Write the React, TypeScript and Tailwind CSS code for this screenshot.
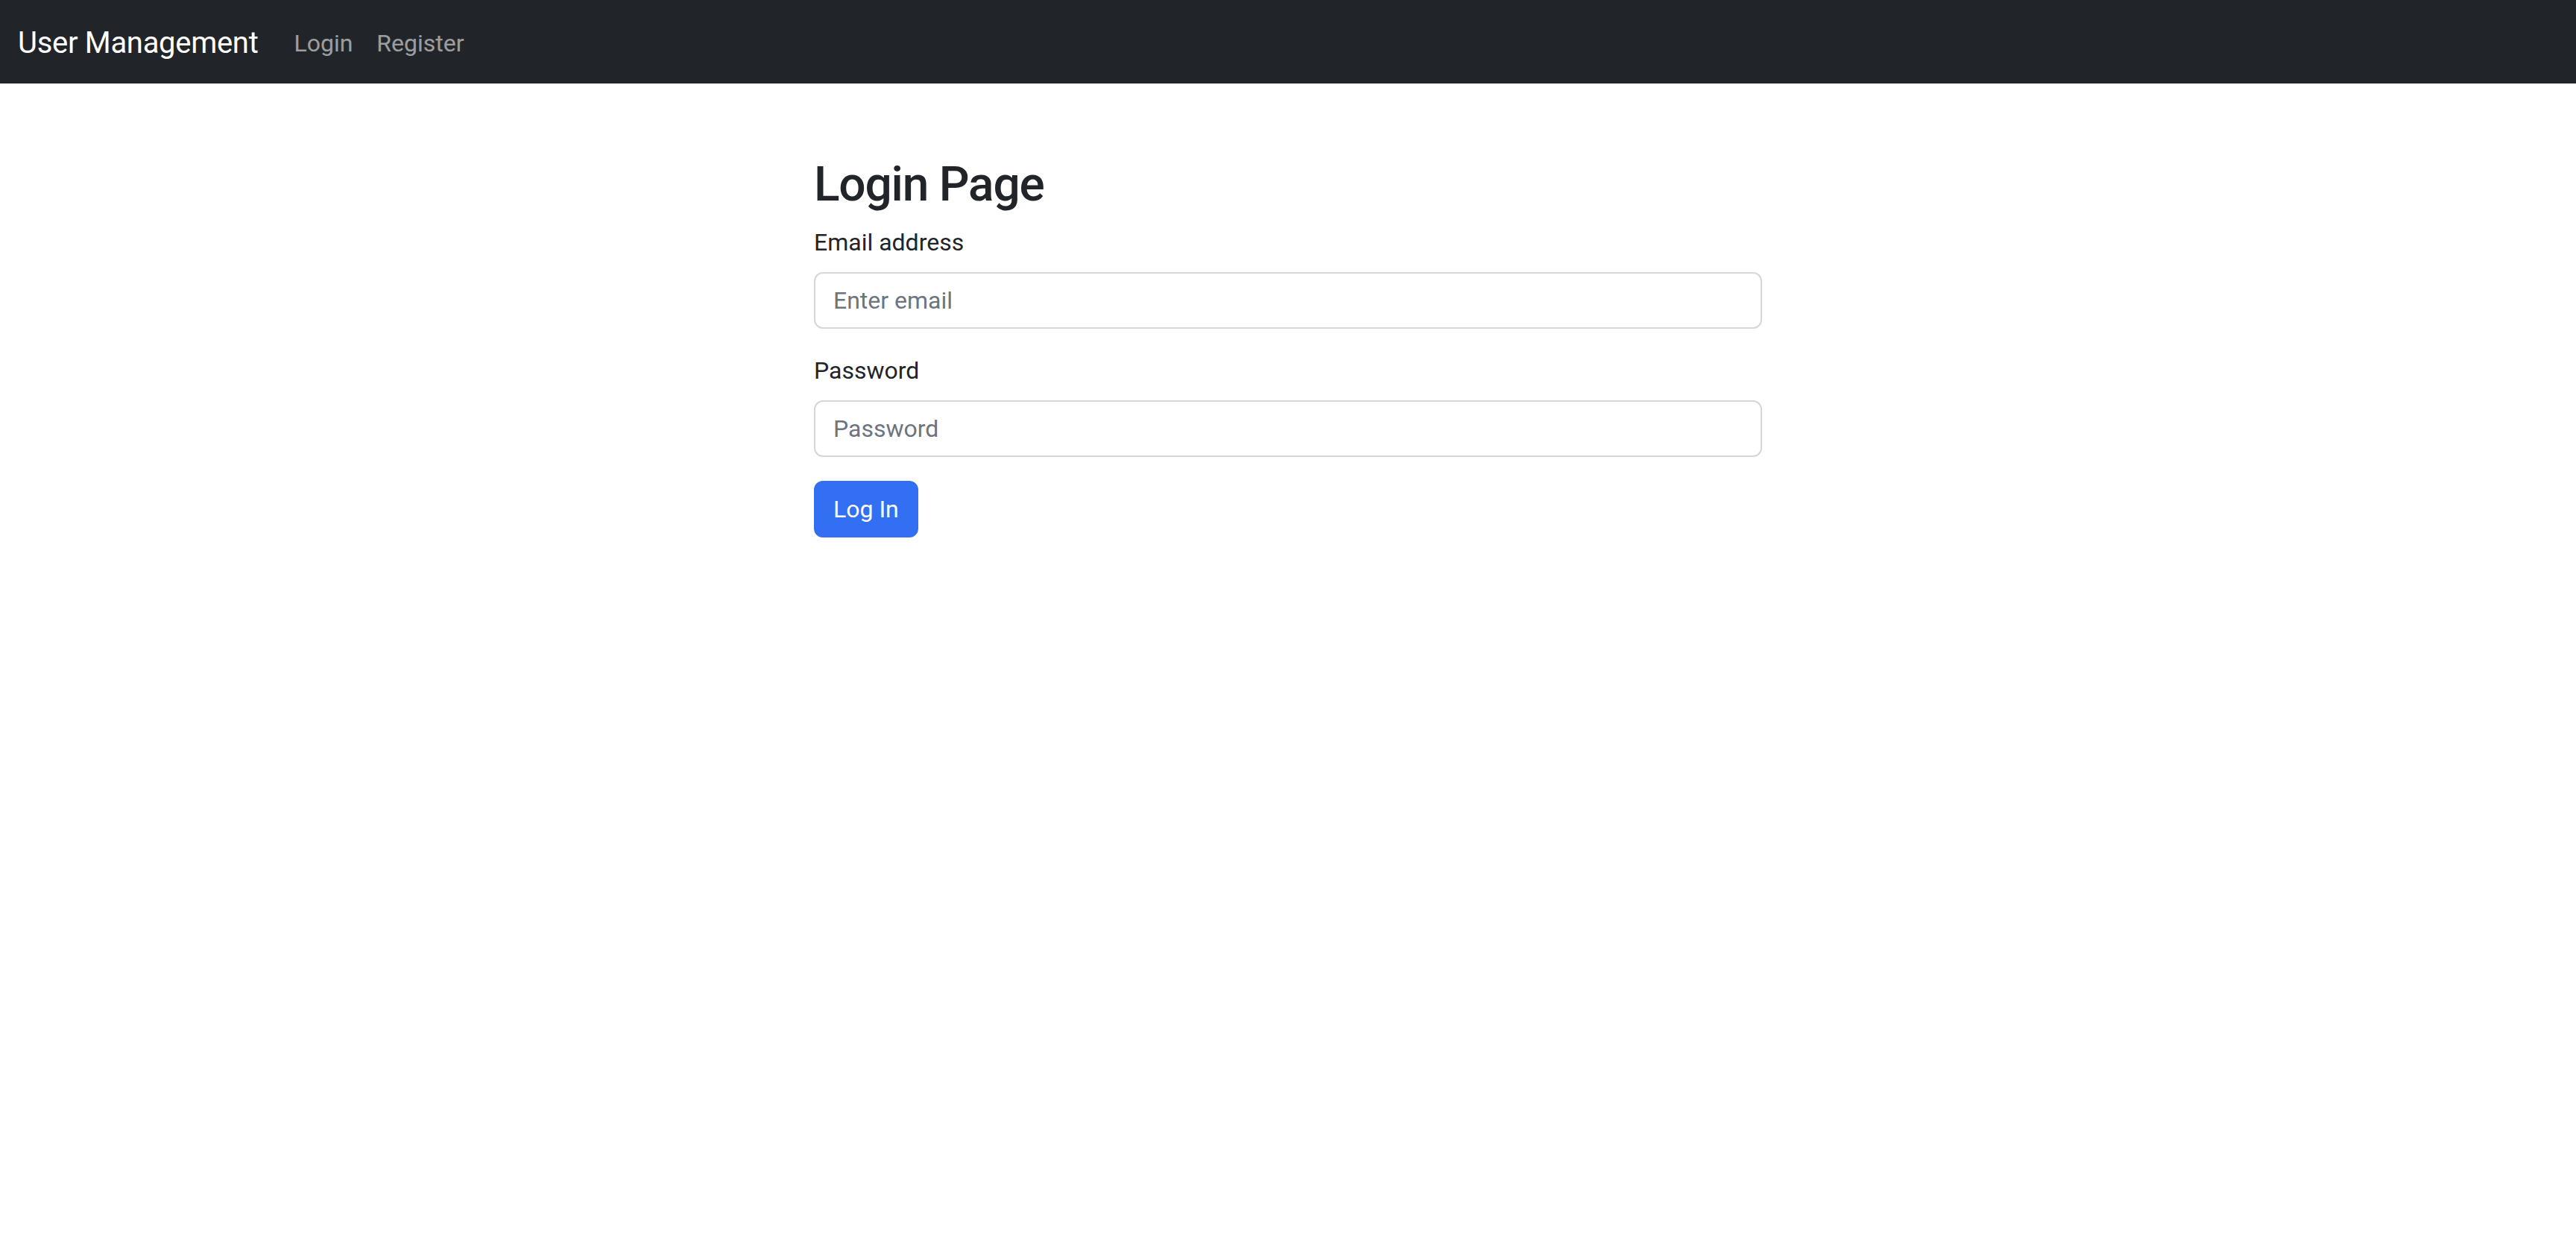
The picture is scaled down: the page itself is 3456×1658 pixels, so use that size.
import React from "react";

export default function App() {
  return (
    <div className="min-h-[1658px] bg-white font-['Roboto','Liberation_Sans',sans-serif] text-[#212529]">
      <nav className="flex h-[112px] items-center bg-[#212529] px-[24px] pt-[3px]">
        <a className="mr-[32px] text-[40px] leading-[60px] tracking-[-0.3px] text-white" href="#">
          User Management
        </a>
        <div className="flex items-center">
          <a className="px-[16px] text-[32px] leading-[48px] text-white/55" href="#">
            Login
          </a>
          <a className="px-[16px] text-[32px] leading-[48px] text-white/55" href="#">
            Register
          </a>
        </div>
      </nav>
      <main className="mx-auto w-[1272px] pt-[98px]">
        <h2 className="mb-[14px] text-[64px] font-medium leading-[1.2] tracking-[-1.2px]">Login Page</h2>
        <form className="flex flex-col" onSubmit={(e) => e.preventDefault()}>
          <div className="mb-[32px] flex flex-col">
            <label className="mb-[16px] block text-[32px] leading-[48px]">Email address</label>
            <input
              type="email"
              placeholder="Enter email"
              className="h-[76px] w-full rounded-[12px] border-[2px] border-[#d3d7db] bg-white px-[24px] text-[32px] leading-[48px] text-[#212529] outline-none placeholder:text-[#6c757d]"
            />
          </div>
          <div className="mb-[32px] flex flex-col">
            <label className="mb-[16px] block text-[32px] leading-[48px]">Password</label>
            <input
              type="password"
              placeholder="Password"
              className="h-[76px] w-full rounded-[12px] border-[2px] border-[#d3d7db] bg-white px-[24px] text-[32px] leading-[48px] text-[#212529] outline-none placeholder:text-[#6c757d]"
            />
          </div>
          <div>
            <button
              type="submit"
              className="h-[76px] rounded-[12px] border-[2px] border-[#336ff2] bg-[#336ff2] px-[24px] text-[32px] leading-[48px] text-white"
            >
              Log In
            </button>
          </div>
        </form>
      </main>
    </div>
  );
}
